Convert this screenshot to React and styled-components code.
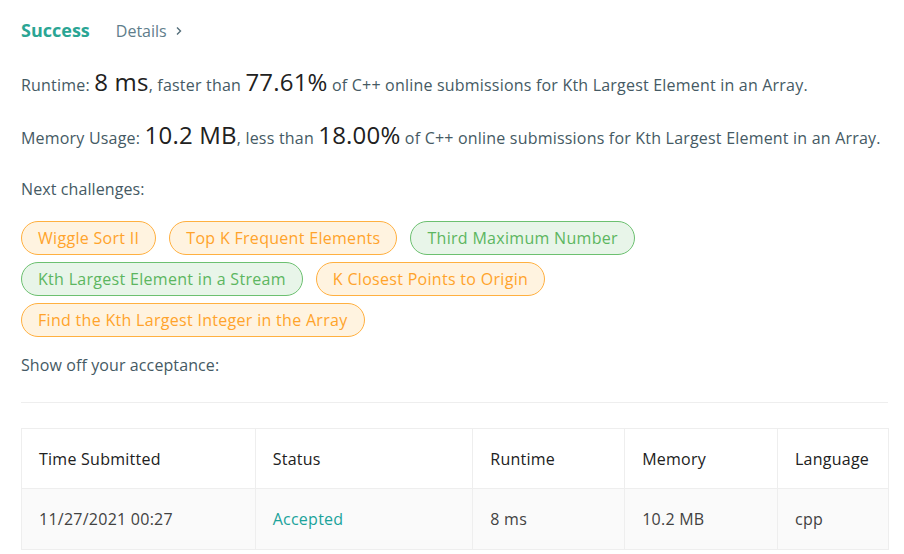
import React from "react";
import styled, { createGlobalStyle } from "styled-components";

const Global = createGlobalStyle`
  html, body { margin: 0; padding: 0; background: #fff; }
  body { font-family: "Open Sans", "Noto Sans", sans-serif; color: #424242; }
`;

const Page = styled.div`
  width: 867px;
  padding: 18px 16px 0 21px;
`;

const Header = styled.div`
  display: flex;
  align-items: baseline;
  gap: 26px;
  height: 28px;
`;

const Title = styled.span`
  font-size: 18px;
  font-weight: 700;
  color: #2aa594;
`;

const DetailsLink = styled.span`
  font-size: 16px;
  color: #607d8b;
  display: inline-flex;
  align-items: center;
  gap: 8px;
`;

const Stat = styled.p`
  margin: 0;
  font-size: 16px;
  color: #455a64;
  line-height: 30px;
  letter-spacing: 0.2px;
  white-space: nowrap;
`;

const Big = styled.span`
  font-size: 24px;
  color: #212121;
  letter-spacing: 0.2px;
`;

const Label = styled.p`
  margin: 0;
  font-size: 16px;
  color: #455a64;
  letter-spacing: 0.1px;
  line-height: 22px;
`;

const Tags = styled.div`
  display: flex;
  flex-wrap: wrap;
  gap: 7px 13px;
  width: 640px;
`;

const Tag = styled.span`
  display: inline-flex;
  align-items: center;
  height: 32px;
  padding: 0 16px;
  border-radius: 17px;
  font-size: 16px;
  letter-spacing: 0.3px;
  border: 1px solid ${(p) => (p.$green ? "#6cc070" : "#ffb040")};
  background: ${(p) => (p.$green ? "#e8f5e9" : "#fff3e0")};
  color: ${(p) => (p.$green ? "#5cb660" : "#ffa32b")};
`;

const Divider = styled.hr`
  border: none;
  border-top: 1px solid #eeeeee;
  margin: 0;
`;

const Table = styled.table`
  border-collapse: collapse;
  width: 868px;
  font-size: 16px;
  letter-spacing: 0.25px;
  color: #212121;
`;

const Th = styled.th`
  text-align: left;
  font-weight: 400;
  height: 60px;
  padding: 0 17px;
  border: 1px solid #eeeeee;
  width: ${(p) => p.$w}px;
  box-sizing: border-box;
`;

const Td = styled.td`
  height: 60px;
  padding: 0 17px;
  border: 1px solid #eeeeee;
  background: #fafafa;
  color: ${(p) => (p.$accent ? "#1ba39a" : "#424242")};
`;

const Section = styled.div`
  display: flex;
  flex-direction: column;
  margin-top: ${(p) => p.$top}px;
`;

const Chevron = () => (
  <svg width="8" height="10" viewBox="0 0 8 10">
    <path d="M2 1.5 L5.5 5 L2 8.5" fill="none" stroke="#546e7a" strokeWidth="1.4" />
  </svg>
);

const tags = [
  ["Wiggle Sort II", false],
  ["Top K Frequent Elements", false],
  ["Third Maximum Number", true],
  ["Kth Largest Element in a Stream", true],
  ["K Closest Points to Origin", false],
  ["Find the Kth Largest Integer in the Array", false],
];

export default function App() {
  return (
    <>
      <Global />
      <Page>
        <Header>
          <Title>Success</Title>
          <DetailsLink>
            Details <Chevron />
          </DetailsLink>
        </Header>
        <Section $top={21}>
          <Stat>
            Runtime: <Big>8 ms</Big>, faster than <Big>77.61%</Big> of C++ online submissions for Kth Largest Element in an Array.
          </Stat>
        </Section>
        <Section $top={20}>
          <Stat>
            Memory Usage: <Big>10.2 MB</Big>, less than <Big>18.00%</Big> of C++ online submissions for Kth Largest Element in an Array.
          </Stat>
        </Section>
        <Section $top={25}>
          <Label>Next challenges:</Label>
        </Section>
        <Section $top={21}>
          <Tags>
            {tags.map(([t, g]) => (
              <Tag key={t} $green={g}>{t}</Tag>
            ))}
          </Tags>
        </Section>
        <Section $top={17}>
          <Label>Show off your acceptance:</Label>
        </Section>
        <Section $top={26}>
          <Divider />
        </Section>
        <Section $top={25}>
          <Table>
            <thead>
              <tr>
                <Th $w={234}>Time Submitted</Th>
                <Th $w={218}>Status</Th>
                <Th $w={152}>Runtime</Th>
                <Th $w={153}>Memory</Th>
                <Th $w={111}>Language</Th>
              </tr>
            </thead>
            <tbody>
              <tr>
                <Td>11/27/2021 00:27</Td>
                <Td $accent>Accepted</Td>
                <Td>8 ms</Td>
                <Td>10.2 MB</Td>
                <Td>cpp</Td>
              </tr>
            </tbody>
          </Table>
        </Section>
      </Page>
    </>
  );
}
